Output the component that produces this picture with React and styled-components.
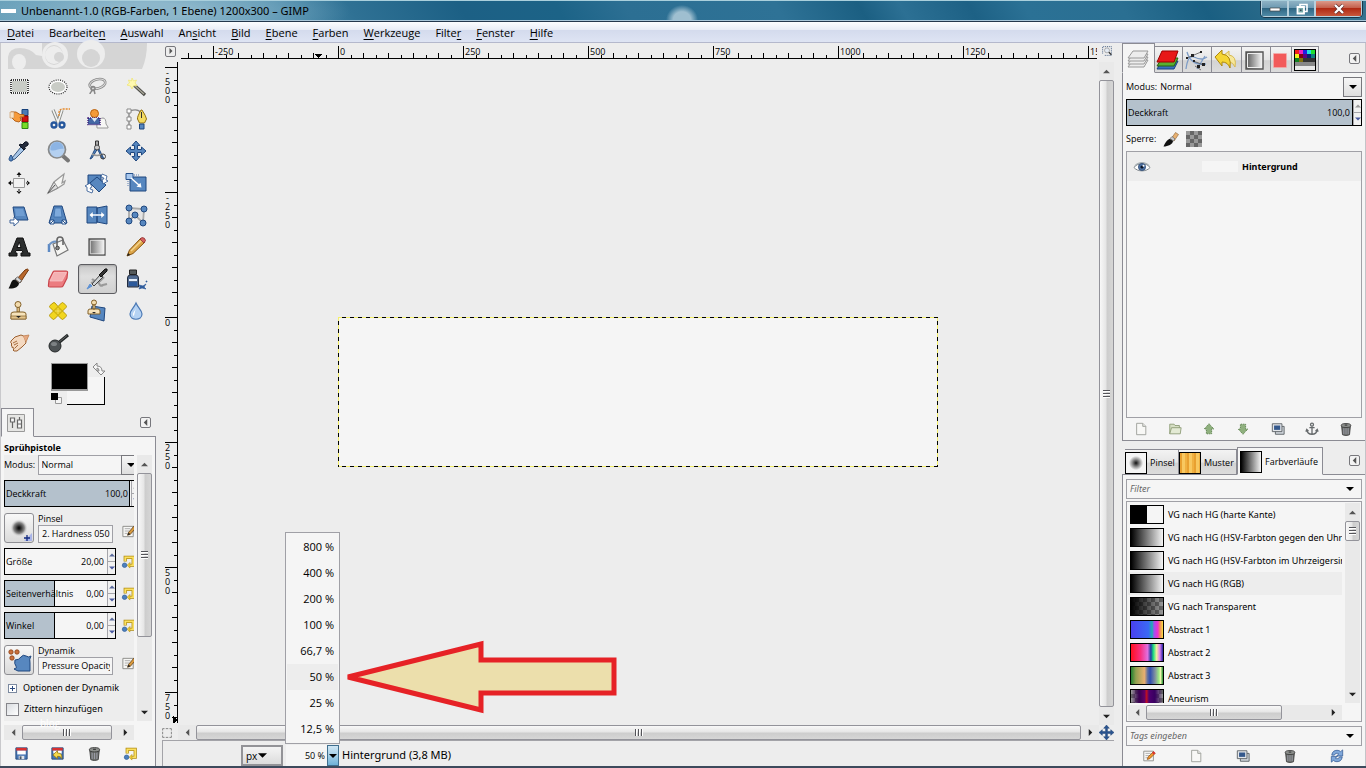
import React, { useState } from 'react';
import styled, { createGlobalStyle, css } from 'styled-components';

const GlobalStyle = createGlobalStyle`
  * { box-sizing: border-box; }
  body {
    margin: 0;
    background: #ededed;
    color: #000;
    font-family: "Open Sans", "Noto Sans", sans-serif;
    font-size: 9px;
    line-height: 12px;
  }
  button, input, select { font: inherit; color: inherit; }
  button { padding: 0; border: 0; background: none; }
  ul { list-style: none; margin: 0; padding: 0; }
`;

const line = '#8b8b93';
const wideFont = '"Noto Sans", "Open Sans", sans-serif';

/* ---------- window ---------- */

const Window = styled.div`
  display: flex;
  flex-direction: column;
  height: 100vh;
  overflow: hidden;
  border-bottom: 2px solid #3d4a5c;
`;

const TitleBar = styled.header`
  display: flex;
  align-items: flex-start;
  flex: none;
  height: 22px;
  overflow: hidden;
  border-top: 1px solid #a9cfdc;
  border-bottom: 1px solid #24384c;
  box-shadow: inset 0 -1px #a8c6d8;
  background:
    radial-gradient(ellipse 16px 15px at 682px 19px, #9fbfd0 0 55%, transparent),
    radial-gradient(ellipse 200px 40px at 150px 10px, #8db7cb 20%, transparent),
    linear-gradient(60deg, #5f9ab5 0, #4a8bab 20%, #2f7194 26%, #1c6085 34%, #1c6387 41%, #2c6f93 46%, #2e7296 57%, #1b5f82 63%, #2c7094 66%, #1d6185 71%, #2b7195 75%, #2a6f92 82%, #1a5f82 88%, #34728f 96%);
`;

const AppIcon = styled.span`
  width: 15px;
  height: 4px;
  margin: 8px 5px 0 1px;
  background: #fff;
`;

const Title = styled.h1`
  flex: 1;
  margin: 2px 0 0;
  font-family: ${wideFont};
  font-size: 11px;
  font-weight: 400;
  line-height: 15px;
`;

const WindowButtons = styled.div`
  display: flex;
  margin-right: 3px;
  border: 1px solid #18364a;
  border-top: 0;
  border-radius: 0 0 5px 5px;
  overflow: hidden;
`;

const WindowButton = styled.button`
  display: flex;
  justify-content: center;
  align-items: center;
  width: ${p => (p.$close ? 47 : 27)}px;
  height: 16px;
  border: solid #b7d0dc;
  border-width: 0 1px 1px;
  background: ${p => (p.$close
    ? 'linear-gradient(#dc9a8a, #c4604c 45%, #b02a14 50%, #c8583c)'
    : 'linear-gradient(#8fb2c4, #6d9ab2 45%, #2f6683 50%, #4f8aa6)')};
`;

const MenuBar = styled.nav`
  display: flex;
  flex: none;
  gap: 15px;
  height: 21px;
  padding: 0 7px;
  font-size: 11px;
  line-height: 21px;
  border-bottom: 1px solid #b4b8cc;
  background: linear-gradient(#fcfdfe, #e9edf6 38%, #d4dbed 42%, #dee4f3);
`;

const MenuItem = styled.button`
  u { text-underline-offset: 2px; }
`;

const Body = styled.div`
  display: grid;
  grid-template-columns: 156px minmax(0, 1fr) 244px;
  flex: 1;
  min-height: 0;
`;

/* ---------- shared widgets ---------- */

const Svg = styled.svg`
  display: block;
  flex: none;
  overflow: ${p => (p.$clip ? 'hidden' : 'visible')};
`;

const IconButton = styled.button`
  display: flex;
  justify-content: center;
  align-items: center;
  width: 18px;
  height: 18px;
`;

const IconRow = styled.div`
  display: flex;
  justify-content: space-between;
  align-items: center;
  flex: none;
  height: ${p => p.$height || 20}px;
  padding: ${p => p.$pad || '0 8px'};
`;

const DockMenuButton = styled.button`
  display: flex;
  justify-content: center;
  align-items: center;
  width: 11px;
  height: 11px;
  margin: 0 5px 9px auto;
  border: 1px solid #77777c;
  border-radius: 2px;
  background: #f2f2f2;
`;

const ScrollTrack = styled.div`
  display: flex;
  flex: none;
  flex-direction: ${p => (p.$vertical ? 'column' : 'row')};
  ${p => (p.$vertical ? 'width: 15px;' : 'height: 15px;')}
  background: #e9e9e9;
`;

const ScrollArrow = styled.button`
  display: flex;
  flex: none;
  justify-content: center;
  align-items: center;
  width: ${p => (p.$vertical ? 15 : 18)}px;
  height: ${p => (p.$vertical ? 18 : 15)}px;
`;

const Thumb = styled.div`
  display: flex;
  justify-content: center;
  align-items: center;
  flex: ${p => p.$share} 0 0;
  border: 1px solid #93939a;
  border-radius: 2px;
  background: linear-gradient(${p => (p.$vertical ? '90deg' : '180deg')}, #f8f8f8, #e6e6e6 45%, #cdcdcd 55%, #d6d6d6);
`;

const Rest = styled.div`
  flex: ${p => p.$share} 0 0;
`;

const Grip = styled.span`
  width: ${p => (p.$vertical ? 7 : 8)}px;
  height: ${p => (p.$vertical ? 8 : 7)}px;
  background: repeating-linear-gradient(${p => (p.$vertical ? '180deg' : '90deg')}, #55555a 0 1px, #fff 1px 2px, transparent 2px 3px);
`;

function Triangle({ dir, size = 7, color = '#222' }) {
  const paths = {
    up: 'M0 6 4 2l4 4z',
    down: 'M0 2h8L4 6z',
    left: 'M6 0v8L2 4z',
    right: 'M2 0v8l4-4z',
  };
  return <Svg width={size} height={size} viewBox="0 0 8 8"><path d={paths[dir]} fill={color} /></Svg>;
}

function Scrollbar({ vertical, share = 100 }) {
  return (
    <ScrollTrack $vertical={vertical}>
      <ScrollArrow $vertical={vertical} aria-label="zurück"><Triangle dir={vertical ? 'up' : 'left'} color="#555" /></ScrollArrow>
      <Thumb $vertical={vertical} $share={share}><Grip $vertical={vertical} /></Thumb>
      {share < 100 && <Rest $share={100 - share} />}
      <ScrollArrow $vertical={vertical} aria-label="weiter"><Triangle dir={vertical ? 'down' : 'right'} /></ScrollArrow>
    </ScrollTrack>
  );
}

const SpinBox = styled.div`
  display: flex;
  flex: none;
  align-items: center;
  width: ${p => p.$width};
  height: 27px;
  border: 1px solid #000;
  background: ${p => (p.$fill
    ? `linear-gradient(90deg, #b4c1cc ${p.$fill}, #000 ${p.$fill}, #000 calc(${p.$fill} + 1px), #f5f5f5 calc(${p.$fill} + 1px))`
    : '#f5f5f5')};

  label {
    flex: 1;
    width: 0;
    padding-left: 1px;
    white-space: nowrap;
  }
  input {
    width: 32px;
    padding: 0 2px 0 0;
    border: 0;
    background: none;
    text-align: right;
    outline: 0;
  }
`;

const Steppers = styled.div`
  display: flex;
  flex-direction: column;
  width: 8px;
  height: 25px;
  margin-left: 1px;
  border-left: 1px solid #a5a5aa;
  background: #f1f1f1;

  button {
    flex: 1;
    display: flex;
    justify-content: center;
    align-items: center;
  }
  button + button { border-top: 1px solid #a5a5aa; }
`;

function SpinField({ id, label, value, width, fill, dim }) {
  return (
    <SpinBox $width={width} $fill={fill}>
      <label htmlFor={id}>{label}</label>
      <input id={id} defaultValue={value} />
      <Steppers>
        <button aria-label="mehr"><Triangle dir="up" size={6} color={dim ? '#999' : '#5a6a9c'} /></button>
        <button aria-label="weniger"><Triangle dir="down" size={6} color="#4a5aa0" /></button>
      </Steppers>
    </SpinBox>
  );
}

/* ---------- small icons, 16 x 16 ---------- */

const small = {
  reset: <g fill="none"><path d="M4.500 8V3.500H13V12H9" stroke="#b08c10" strokeWidth="3.400" /><path d="M4.500 7.500V3.500H13V12H9" stroke="#fbe060" strokeWidth="1.800" /><path d="M9.500 9v6l-3-3z" fill="#f0cf3a" stroke="#b08c10" strokeWidth=".6" /><circle cx="3.800" cy="12" r="2.400" fill="#4d80bd" stroke="#2a5a96" strokeWidth=".7" /></g>,
  edit: <g><path d="M2 2.500h11v11H2z" fill="#f7f7f5" stroke="#8b8b88" /><path d="M4 5h6M4 7.500h5M4 10h3" stroke="#aaa" /><path d="m7 12 1-3 6-7 2 2-6 7z" fill="#d99a3c" stroke="#5c3a12" strokeWidth=".8" /><path d="m7 12 1-3 2 2z" fill="#222" /></g>,
  editRed: <g><path d="M2 2.500h11v11H2z" fill="#f7f7f5" stroke="#8b8b88" /><path d="M4 5h6M4 7.500h5M4 10h3" stroke="#aaa" /><path d="m6 12 1-3 6-6 2 2-6 6z" fill="#f09a30" stroke="#8c4a12" strokeWidth=".8" /><path d="m11.500 4.500 1.800-1.800 2 2-1.800 1.800z" fill="#d33" /></g>,
  save: <g><path d="M2 2h12v12H2z" fill="#4a78b5" stroke="#21467c" /><path d="M2.500 2h11v3h-11z" fill="#d83030" /><path d="M3.500 5h9v4h-9z" fill="#fff" /><path d="M5 10.500h6V14H5z" fill="#dfe4ea" /><path d="M6 11h2v3H6z" fill="#456" /></g>,
  restore: <g><path d="M2 2h12v12H2z" fill="#4a78b5" stroke="#21467c" /><path d="M2.500 2h11v3h-11z" fill="#d83030" /><path d="M3.500 5h9v3h-9z" fill="#fff" /><path d="M3 9.500 8 5v2.500c4 0 5 2 4.500 6C11.500 11.500 10.500 11 8 11v2.500z" fill="#f7d94a" stroke="#8c7210" strokeWidth=".8" /></g>,
  trash: <g><path d="m3 5 1 9.500c2 1.200 6 1.200 8 0L13 5z" fill="#6c6f6c" stroke="#333" strokeWidth=".9" /><path d="M5.500 7v7M8 7v7M10.500 7v7" stroke="#aab" strokeWidth=".8" /><ellipse cx="8" cy="4" rx="5.500" ry="2.300" fill="#8c8f8c" stroke="#333" strokeWidth=".9" /><path d="M6.500 3.500h3" stroke="#222" /></g>,
  page: <g><path d="M3 1.500h7l3.500 3.500v9.500H3z" fill="#f8f8f6" stroke="#999b96" /><path d="M10 1.500V5h3.500" fill="#e4e4e0" stroke="#999b96" /></g>,
  folder: <g><path d="M2 13.500v-11h5l1 1.500h5v3" fill="#d6dfc4" stroke="#8c9a75" /><path d="M2 13.500 4 6.500h11l-1 7z" fill="#e3ead4" stroke="#8c9a75" /></g>,
  raise: <path d="m8 2 5.500 6H11v5.500H5V8H2.500z" fill="#8fb07e" stroke="#567c46" strokeDasharray="1.500 1" />,
  lower: <path d="m8 14 5.500-6H11V2.500H5V8H2.500z" fill="#8fb07e" stroke="#567c46" strokeDasharray="1.500 1" />,
  copy: <g><path d="M5 5h10v9H5z" fill="#cfd4da" stroke="#565b60" /><path d="M1.500 2h11v9h-11z" fill="#e3e6ea" stroke="#565b60" /><path d="M3.500 4h7v5h-7z" fill="#34588c" /></g>,
  anchor: <g fill="none" stroke="#666a6c" strokeWidth="1.500"><circle cx="8" cy="3" r="1.700" /><path d="M8 5v9M5 6.500h6M2 9c.5 3.500 3 5 6 5s5.500-1.500 6-5M1 11l1-2.500 2 2M15 11l-1-2.500-2 2" /></g>,
  refresh: <g><path d="M2 7c.5-4 3-5.500 6-5.500 2 0 3 .6 4 1.500l2.500-2V8H7.500L10 5.700C8 4.200 5.500 5 5 7z" fill="#80a8da" stroke="#2c5590" strokeWidth=".8" /><path d="M14 9c-.5 4-3 5.500-6 5.500-2 0-3-.6-4-1.500l-2.500 2V8.500h7L6 10.300c2 1.500 4.500.7 5-1.300z" fill="#80a8da" stroke="#2c5590" strokeWidth=".8" /></g>,
  brush: <g><path d="m8 8 4.500-6.500 3 2L11 10z" fill="#e8b070" stroke="#8a6030" strokeWidth=".6" /><path d="m7 7.500 3.500 2.500 1.500-2-3-2.500z" fill="#c9ccd0" stroke="#555" strokeWidth=".6" /><path d="M7 8c-2 0-4 2-6.500 7.500C5 15.500 10 13 10 10z" fill="#111" /></g>,
  eye: <g><path d="M0 8.500C3 3.500 13 3.500 16 8.500 12.500 13 3.500 13 0 8.500z" fill="#fff" stroke="#70797f" strokeWidth=".9" /><path d="M.5 7C4 2.500 12 2.500 15.500 7" fill="none" stroke="#9aa4aa" /><circle cx="8" cy="8" r="3.600" fill="#4d71a3" stroke="#27446e" strokeWidth=".7" /><circle cx="8" cy="8" r="1.600" fill="#0b1526" /><circle cx="9.500" cy="6.700" r="1" fill="#fff" /></g>,
  nav: <path d="M8 0 5 3.500h2V7H3.500V5L0 8l3.500 3V9H7v3.500H5L8 16l3-3.500H9V9h3.500v2L16 8l-3.500-3v2H9V3.500h2z" fill="#2a5490" stroke="#163a6c" strokeWidth=".5" />,
  zoomFit: <g fill="none" stroke="#345078"><path d="M1 12V1h14v14H4" strokeDasharray="1.500 1.500" strokeWidth="1.400" /><circle cx="8" cy="7" r="4" fill="#e2e9f2" stroke="#888" /><path d="m11 10 4 4" stroke="#333" strokeWidth="2" /></g>,
  quickMask: <path d="M1 4V1h3M6 1h4M12 1h3v3M15 6v4M15 12v3h-3M10 15H6M4 15H1v-3M1 10V6" fill="none" stroke="#777" strokeWidth="1.400" />,
};

const SmallIcon = ({ name, size = 14 }) => <Svg width={size} height={size} viewBox="0 0 16 16">{small[name]}</Svg>;

/* ---------- toolbox icons, 24 x 24 ---------- */

const blue = { fill: '#5787bf', stroke: '#1f477f', strokeWidth: 1 };

const tools = [
  ['Rechteckige Auswahl', <g><path d="M4.500 5.500h16v12h-16z" fill="#c9ccc6" stroke="#fff" /><path d="M4 5h17M4 18h17M4 5v13M21 5v13" fill="none" stroke="#000" strokeWidth="1.400" strokeDasharray="1 1" /></g>],
  ['Elliptische Auswahl', <g><ellipse cx="12" cy="12" rx="9" ry="7" fill="#fff" /><ellipse cx="12" cy="12" rx="9" ry="7" fill="none" stroke="#222" strokeWidth="1.200" strokeDasharray="1 1.200" /><ellipse cx="12" cy="12" rx="7" ry="5" fill="#c9ccc6" /></g>],
  ['Freie Auswahl', <g fill="none" stroke="#888" ><ellipse cx="12.500" cy="9" rx="8" ry="4.500" strokeWidth="2.600" transform="rotate(-15 12 9)" /><ellipse cx="12.500" cy="9" rx="8" ry="4.500" stroke="#ddd" strokeWidth="1" transform="rotate(-15 12 9)" /><circle cx="8" cy="13.500" r="2" strokeWidth="1.500" /><path d="M7 15c0 2-2 2-2 4M9 15l1 4" strokeWidth="1.500" /></g>],
  ['Zauberstab', <g><path d="m10 10 11 10" stroke="#4b4b46" strokeWidth="3.200" /><path d="m10 10 10 9" stroke="#aaa89a" strokeWidth="1.300" /><path d="m8 3 1.500 3 3-1-1.500 3 2 2.500-3.500.2L8 14l-1.500-3L3 10l2.500-2L4.500 5l3 1z" fill="#fff9b0" stroke="#efe478" strokeWidth=".8" /></g>],
  ['Nach Farbe auswählen', <g><path d="M15 2.500h6v6h-6z" fill="#4a7ab5" stroke="#16407a" /><path d="M15 9h6v6h-6z" fill="#d01010" stroke="#800" /><path d="M15 15.500h6v6h-6z" fill="#78dc28" stroke="#2e8a10" /><path d="M4 5h5l4 2.500h4v2.500h-4l1 3-2 2-4-1-4-4z" fill="#f79b3a" stroke="#b05a10" strokeWidth=".9" /><path d="M3 5h4v6H3z" fill="#f6e2c8" stroke="#c89058" strokeWidth=".6" /></g>],
  ['Magnetische Schere', <g fill="none"><path d="m7 3 5 12m4-12-4 12" stroke="#888b88" strokeWidth="3.400" /><path d="m7 3 5 12m4-12-4 12" stroke="#f4f4f2" strokeWidth="1.600" /><circle cx="8" cy="18" r="2.500" stroke="#25569c" strokeWidth="2.300" /><circle cx="16" cy="18" r="2.500" stroke="#25569c" strokeWidth="2.300" /><path d="M13 9V6q0-4 4-4h7" stroke="#e58a2c" strokeWidth="1.300" strokeDasharray="2 1" /></g>],
  ['Vordergrundauswahl', <g><path d="M12 20c-1-2 2-9 6-9q3 0 3 6l2 3v1H12z" fill="#f7f7f5" stroke="#999" /><circle cx="9.500" cy="6.500" r="4" fill="#f49a38" stroke="#b8600c" /><path d="M3 11h12v6.500H3z" fill="#4468a5" stroke="#3c1878" strokeDasharray="1 1" strokeWidth="1.400" /><path d="m6.500 11 3 4 3-4z" fill="#dce6f2" /></g>],
  ['Pfade', <g><path d="M5 4v16M6 4q8-3 11 2" fill="none" stroke="#888" strokeWidth="1.400" /><path d="M3 2h4v4H3zM3 10h4v4H3zM3 18h4v4H3z" fill="#fff" stroke="#888" /><path d="M17 3q-4 7-3.500 9l2 4h5l2-4Q22 9 18 3z" fill="#f5dc62" stroke="#927010" /><path d="M17.500 5v6" stroke="#333" /><path d="M15.500 17h4.500v5h-4.500z" {...blue} /></g>],
  ['Farbpipette', <g><path d="m14 8 3 3-9 9c-2 1-3 1-3-1z" fill="#a9c7e8" stroke="#3c5a80" /><path d="m12 6 5 5 1.500-1.500-1-1L21 6c1-2-1-4-3-3l-3 3-1-1z" fill="#242b3c" stroke="#0c1220" /><path d="M4 16c-3 4-2 6 0 6s3-2 0-6z" {...blue} /></g>],
  ['Vergrößerung', <g><path d="m17 17 5 4.500" stroke="#777" strokeWidth="4" strokeLinecap="round" /><circle cx="11" cy="10.500" r="8.500" fill="#b4d0f0" stroke="#888a8b" strokeWidth="1.700" /><path d="M4.500 11c4 2 9-2 13-1 0-4-3-7-6.500-7S4 6 4.500 11z" fill="#8cb4e4" /></g>],
  ['Maßband', <g><path d="m11 8-6 12 2-1 6-10M13 8l6 12-2-1-5-10" {...blue} /><path d="M10.500 2h3v7h-3z" fill="#aaa" stroke="#333" /><circle cx="12" cy="8.500" r="2.500" fill="#ccc" stroke="#444" /><path d="M7 15q5 3 10 0" fill="none" stroke="#999" strokeWidth="1.500" /><circle cx="18" cy="17.500" r="2.500" fill="none" stroke="#444" /></g>],
  ['Verschieben', <path d="m12 2 4 4.500h-2.500v4h4V8L22 12l-4.500 4v-2.500h-4v4H16L12 22l-4-4.500h2.500v-4h-4V16L2 12l4.500-4v2.500h4v-4H8z" {...blue} />],
  ['Ausrichten', <g><path d="M6.500 7.500h11v9h-11z" fill="#f3f3f3" stroke="#999" /><path d="m12 1 2.500 3h-5zM12 23l2.500-3h-5zM1 12l3-2.500v5zM23 12l-3-2.500v5zM11.500 3h1v3h-1zM11.500 18h1v3h-1zM3 11.500h3v1H3zM19 11.500h2v1h-2z" fill="#111" /></g>],
  ['Zuschneiden', <g><path d="M2 22 8 11 18 3l-2 9 3-2-1 3-6 4z" fill="#f5f5f3" stroke="#999" strokeWidth="1.200" /><path d="m2 22 6-11 4 6z" fill="#ddd" stroke="#888" /><path d="m2 22 7-8" stroke="#555" /></g>],
  ['Drehen', <g><path d="M3 4h13v9H3z" {...blue} /><path d="m12 6 9 8-7 7-9-9z" {...blue} /><path d="m17 3 5 2-1 4 2 1-5 3-1-5 2 0q0-2-3-2zM7 22l-5-2 0-4-2-1 5-3 2 4-2 1q0 2 3 2z" fill="#fff" stroke="#2a538f" strokeWidth=".8" /></g>],
  ['Skalieren', <g><path d="M6 6h16v14H6z" {...blue} /><path d="M2 2.500h7v6H2z" fill="#a9c8ee" stroke="#24508c" /><path d="m7 7 9 8" stroke="#fff" strokeWidth="1.500" /><path d="m17.500 16.500-5-.7 4-4z" fill="#fff" /><path d="M10 4h5M4 10v6" stroke="#5a7db0" strokeDasharray="1 1" /></g>],
  ['Scheren', <g><path d="M6 4h11l4 13H8z" {...blue} /><path d="M8 6h8l2 7H9z" fill="#6f9dd2" /><path d="M3 17h4v-3l5 4.500L7 23v-3H3z" fill="#fff" stroke="#2a538f" strokeWidth=".9" /></g>],
  ['Perspektive', <g><path d="M8 3h8l5 17H3z" {...blue} /><path d="M9 5h6l1 9H8z" fill="#7eaadc" stroke="#376aa8" strokeWidth=".7" /><path d="M4 17h4v4H4zM16 17h4v4h-4z" fill="#fff" stroke="#24508c" /><path d="m4 21 4-4M20 21l-4-4" stroke="#24508c" /></g>],
  ['Spiegeln', <g><path d="M2 4h10v16H2zM12 5l10-2v18l-10-2z" {...blue} /><path d="m4 12 4-3.500V11h8V8.500l4 3.500-4 3.500V13H8v2.500z" fill="#fff" stroke="#376aa8" strokeWidth=".5" /></g>],
  ['Käfig-Transformation', <g><path d="M5 5l15 1-1 14-8-8-6 6z" fill="#e4e4e4" stroke="#aaa" strokeWidth="1.800" />{[[5, 5], [20, 6], [11, 12], [5, 18], [19, 20]].map(([x, y]) => <circle key={x + y} cx={x} cy={y} r="3" {...blue} />)}</g>],
  ['Text', <path d="M2 21v-3h2L10 3h6l5 15h2v3h-9v-3h2l-.8-2.500H9L8 18h2v3zM10 12.500h4L12.300 7z" fill="#2c2e2e" stroke="#111" fillRule="evenodd" />],
  ['Füllen', <g><path d="M3 9v8" stroke="#5d8ac4" strokeWidth="2.500" /><path d="m7 9 10-4 5 10-11 6z" fill="#f5f5f3" stroke="#777" strokeWidth="1.200" /><path d="M3 10q4-5 9-3" fill="none" stroke="#6d93c4" strokeWidth="2" /><path d="M11 12V5q0-3 3-3t3 3v5" fill="none" stroke="#666" strokeWidth="1.600" /><circle cx="11.500" cy="13" r="1.800" fill="#888" stroke="#444" /></g>],
  ['Farbverlauf', <g><defs><linearGradient id="toolGrad"><stop offset="0" stopColor="#666" /><stop offset="1" stopColor="#fff" /></linearGradient></defs><path d="M4 4h16v16H4z" fill="url(#toolGrad)" stroke="#555" strokeWidth="1.300" /><path d="M5.300 5.300h13.500v13.500H5.300z" fill="none" stroke="#eee" strokeWidth=".8" /></g>],
  ['Stift', <g><path d="m3 21 2.500-6L17 3l4 4L9 18.500z" fill="#dca548" stroke="#87540f" /><path d="m7 16 11-11" stroke="#f3d48b" strokeWidth="1.500" /><path d="m16 4 2-1.500q3 0 3.500 3L20 8z" fill="#d56262" stroke="#923030" strokeWidth=".8" /><path d="m3 21 1.200-3 2 2z" fill="#222" /></g>],
  ['Pinsel', <g><path d="M9 13 18 3q3-2 3.500 0L13 16z" fill="#b9682c" stroke="#74380c" /><path d="m8 12 5 4 1.500-2.500-4-3.500z" fill="#d9dadc" stroke="#666" /><path d="M8 12.500c-4 0-4 5-6.500 9C7 22 12 20 12 16z" fill="#111" /></g>],
  ['Radierer', <g><path d="M3 13 7 5q.5-1 1.500-1H20q2 0 1.500 2L21 11l-4 8q-.5 1-2 1H4q-2 0-1.500-2z" fill="#ec7c80" stroke="#c8464c" strokeWidth="1.200" /><path d="m8 5.500-4 8.500h12l4.500-8.500z" fill="#f4b0b2" stroke="#f9cccd" strokeWidth=".7" /></g>],
  ['Sprühpistole', <g><path d="M6 16q5-2 8 0 1 4 4 2l4-1M7 12q3 3 8 2l4-4" fill="none" stroke="#999" strokeWidth="2.200" /><path d="m7 17 8-9 3 2-9 9z" fill="#cfd2d4" stroke="#444" /><path d="m14 8 6-6q3-1 2 2l-6 6z" fill="#333" stroke="#111" /><path d="m2 22 3-5 2 2z" fill="#5f92d4" stroke="#5f92d4" /></g>],
  ['Tinte', <g><path d="M3.500 11q0-3 3-3h5q3 0 3 3v9h-11z" fill="#506a90" stroke="#222c40" /><path d="M5 12h8v2H5z" fill="#e4eefb" /><path d="M5 15h8v4H5z" fill="#2c5a9c" /><path d="M5.500 3h7v4.500h-7z" fill="#545a5c" stroke="#222" /><path d="m15 18 4 1 3-2-2 3 2 2-4-1-3 1 1-2zM22 14h1v1h-1z" fill="#2f5c9c" stroke="#2f5c9c" strokeWidth=".7" /></g>],
  ['Klonen', <g><circle cx="11" cy="5.500" r="3" fill="#f3dcae" stroke="#826028" /><path d="M10 8.500h2.500V13H10z" fill="#dcbb80" stroke="#826028" strokeWidth=".8" /><path d="M4 20v-5q0-2 3-2h9q3 0 3 2v5z" fill="#f6e3bb" stroke="#826028" /><path d="M4 17h15v3H4z" fill="#e2c48c" stroke="#826028" strokeWidth=".7" /><path d="M9 17h5l-2.500 2z" fill="#222" /></g>],
  ['Heilen', <g><path d="M4 6.500 7 4q1-1 2 0l3 3.500L15.500 4q1-1 2 0L20 6.500q1 1 0 2L16.500 12l3.500 3.500q1 1 0 2L17.500 20q-1 1-2 0L12 16.500 8.500 20q-1 1-2 0L4 17.500q-1-1 0-2L7.500 12 4 8.500q-1-1 0-2z" fill="#f2d61f" stroke="#b89a08" strokeLinejoin="round" /><path d="m12 7.500 4.500 4.500-4.500 4.500L7.500 12z" fill="#e2c416" stroke="#b89a08" strokeWidth=".7" /><path d="M9.500 12h5M12 9.500v5" stroke="#fff29a" strokeDasharray="1 1" /></g>],
  ['Perspektivisches Klonen', <g><path d="m7 7 13 2-1 13-14-4z" {...blue} /><circle cx="9" cy="3.500" r="2.500" fill="#f3dcae" stroke="#826028" /><path d="M8 6h2v4H8zM3 15v-3q0-2 2-2h8q2 0 2 2v3z" fill="#f6e3bb" stroke="#826028" /><path d="M7 13h4l-2 1.500z" fill="#222" /></g>],
  ['Weichzeichnen', <g><path d="M12 4c-2 5-6 7-6 11 0 7 12 7 12 0 0-4-4-6-6-11z" fill="#b5d2f3" stroke="#4a78b4" strokeWidth="1.200" /><path d="M12 9c-1 3-3 4-3 6s1 2 1 2 1-5 2-8z" fill="#fff" /></g>],
  ['Verschmieren', <g><path d="m4 10 4-4 6-2q3 0 4 4l1 4-4 4-5 4-3 0q-2-1 0-2l0-1q-3 0-2-2-2-1 0-2-2-1-1-3z" fill="#f4d9c1" stroke="#9c6030" /><path d="m6 12 4-2M7 14l4-2M8 17l3-3" stroke="#9c6030" strokeWidth=".9" /><path d="m16 5 6-1-3 7" fill="#e6a880" stroke="#c08050" strokeWidth=".8" /></g>],
  ['Abwedeln', <g><path d="m11 13 11-9" stroke="#222627" strokeWidth="3" /><path d="m12 12 9-7.500" stroke="#777" strokeWidth=".8" /><circle cx="9" cy="15" r="6" fill="#4d5254" stroke="#25292a" /><ellipse cx="8" cy="13" rx="3" ry="2" fill="#7d8284" /></g>],
];

/* ---------- toolbox ---------- */

const LeftDock = styled.aside`
  display: flex;
  flex-direction: column;
  min-height: 0;
  border-left: 1px solid #c9c9cc;
`;

const ToolGrid = styled.div`
  display: grid;
  flex: none;
  grid-template-columns: repeat(4, 39px);
  grid-auto-rows: 32px;
  margin-left: -1px;
`;

const ToolButton = styled.button`
  display: flex;
  justify-content: center;
  align-items: center;
  height: 30px;
  margin-top: 1px;
  padding-right: 2px;
  ${p => p.$active && css`
    border: 1px solid #5c5c60;
    border-radius: 3px;
    background: linear-gradient(#c9c9c9, #dedede 40%, #d0d0d0);
    box-shadow: inset 0 1px 2px #aaa;
  `}
`;

const ColorArea = styled.div`
  flex: none;
  height: 49px;
  padding: 3px 0 0 49px;
`;

const NotebookTabs = styled.div`
  display: flex;
  align-items: flex-end;
  flex: none;
  height: ${p => p.$height}px;
  padding-left: ${p => p.$indent || 0}px;
  box-shadow: inset 0 -1px ${line};
`;

const Tab = styled.button`
  display: flex;
  flex: none;
  align-items: center;
  gap: 3px;
  width: ${p => p.$width}px;
  height: ${p => p.$height}px;
  padding-top: ${p => p.$top || 0}px;
  padding-left: ${p => p.$pad || 0}px;
  white-space: nowrap;
  border: 1px solid ${line};
  border-left-width: ${p => (p.$active ? 1 : 0)}px;
  background: linear-gradient(#f3f3f3, #e6e6e6 50%, #d3d3d3 55%, #dcdcdc);
  ${p => p.$active && css`
    border-bottom-color: #f5f5f5;
    background: #f5f5f5;
  `}
`;

const OptionsPanel = styled.section`
  display: flex;
  flex-direction: column;
  flex: 1;
  min-height: 0;
  padding: 4px 3px 0;
  border-right: 1px solid ${line};
  background: #f5f5f5;
`;

const OptionsTitle = styled.h2`
  flex: none;
  margin: 0;
  font-family: ${wideFont};
  font-size: 9px;
  line-height: 14px;
`;

const OptionsView = styled.div`
  display: flex;
  flex: 1;
  justify-content: space-between;
  min-height: 0;
`;

const OptionsClip = styled.div`
  width: 130px;
  overflow: hidden;
  background: #ededed;
`;

const OptionsForm = styled.div`
  display: flex;
  flex-direction: column;
  gap: 5px;
  width: 136px;
`;

const ModeRow = styled.div`
  display: flex;
  align-items: center;
  height: 20px;
  white-space: nowrap;
`;

const ModeSelect = styled.select`
  appearance: none;
  flex: 1;
  min-width: 0;
  height: 20px;
  padding: 0 3px;
  border: ${p => (p.$plain ? 0 : '1px solid #a0a0a6')};
  border-right: 0;
  border-radius: 0;
  background: #f5f5f5;
`;

const DropButton = styled.button`
  display: flex;
  justify-content: center;
  align-items: center;
  width: 19px;
  height: 20px;
  border: 1px solid #77777c;
  background: linear-gradient(#f6f6f6, #dedede);
`;

const ResourceRow = styled.div`
  display: grid;
  grid-template-columns: 30px 75px 16px;
  column-gap: 4px;
  align-items: center;
  height: 31px;

  > :last-child { margin-left: 4px; margin-top: 8px; }
`;

const ResourceButton = styled.button`
  display: flex;
  justify-content: center;
  align-items: center;
  width: 30px;
  height: 30px;
  border: 1px solid #8e8e93;
  border-radius: 3px;
  background: linear-gradient(#f8f8f8, #dadada);
`;

const ResourceField = styled.div`
  display: flex;
  flex-direction: column;

  input {
    width: 75px;
    height: 18px;
    padding: 0 2px 0 3px;
    border: 1px solid #a0a0a6;
    background: #f5f5f5;
  }
`;

const ResetRow = styled.div`
  display: flex;
  align-items: center;
  gap: 5px;
`;

const ExpanderRow = styled.div`
  display: flex;
  align-items: center;
  gap: 6px;
  height: 16px;
  padding-left: 4px;
  white-space: nowrap;
  font-family: ${wideFont};
`;

const Expander = styled.button`
  display: flex;
  width: 9px;
  height: 9px;
  border: 1px solid #7c8aa0;
  background: linear-gradient(#2b4a80, #2b4a80) center / 5px 1px no-repeat, linear-gradient(#2b4a80, #2b4a80) center / 1px 5px no-repeat, #fff;
`;

const Check = styled.input`
  appearance: none;
  width: 13px;
  height: 13px;
  margin: 0 -1px 0 -2px;
  border: 1px solid #85858a;
  background: linear-gradient(135deg, #d9dce0, #fff);
`;

const FooterGap = styled.div`
  position: relative;
  flex: none;
  width: 130px;
  margin-top: 4px;
`;

const Watermark = styled.span`
  position: absolute;
  left: 36px;
  top: -8px;
  color: #fff;
  font-size: 10px;
`;

function ResetField(props) {
  return (
    <ResetRow>
      <SpinField width="112px" {...props} />
      <button aria-label={`${props.label} zurücksetzen`}><SmallIcon name="reset" size={15} /></button>
    </ResetRow>
  );
}

function Toolbox() {
  const [active, setActive] = useState('Sprühpistole');
  return (
    <LeftDock>
      <Svg width="155" height="28" viewBox="1 0 155 28">
        <path d="M8 26V14q1-9 12-9 10 0 16 7l6 1V0h105q0 15-5 26z" fill="#d5d5d5" />
        <ellipse cx="19" cy="19" rx="7" ry="8" fill="#ededed" />
        <circle cx="55" cy="12" r="13" fill="#ededed" />
        <ellipse cx="54" cy="12" rx="9" ry="10" fill="#d5d5d5" />
        <circle cx="54" cy="12" r="9" fill="#ededed" />
        <circle cx="59" cy="14" r="5" fill="#d5d5d5" />
        <circle cx="91" cy="11" r="14" fill="#ededed" />
        <circle cx="91" cy="15" r="9" fill="#d5d5d5" />
      </Svg>
      <ToolGrid>
        {tools.map(([name, icon]) => (
          <ToolButton key={name} aria-label={name} $active={name === active} onClick={() => setActive(name)}>
            <Svg width="24" height="24" viewBox="0 0 24 24">{icon}</Svg>
          </ToolButton>
        ))}
      </ToolGrid>
      <ColorArea>
        <Svg width="58" height="46" viewBox="0 0 58 46">
          <path d="M17 15h38v28H17z" fill="#000" /><path d="M17 15h37v27H17z" fill="#f5f5f5" />
          <path d="M0 0h38v29H0z" fill="#ededed" /><path d="M1 1h37v28H1z" fill="#999" /><path d="M2 2h35v25H2z" fill="#000" />
          <path d="M5.500 35.500h6v6h-6z" fill="#f5f5f5" stroke="#999" /><path d="M1 31h7v7H1z" fill="#000" />
          <path d="m43 5 4-4v3q5 0 5 5h3l-4 4-4-4h2q0-3-2-3v3z" fill="#f5f5f5" stroke="#888" />
        </Svg>
      </ColorArea>
      <NotebookTabs $height={29}>
        <Tab $active $width={33} $height={29} $pad={5} aria-label="Werkzeugeinstellungen">
          <Svg width="18" height="18" viewBox="0 0 18 18">
            <path d="M.5.500h17v17H.5z" fill="#e6e6e4" stroke="#999" />
            <path d="M3.500 4h4v4h-4zM5.500 8v6M12.500 3v3M10.500 6h4v4h-4zM10.500 10h4v4h-4z" fill="#f8f8f8" stroke="#666" strokeWidth="1.200" />
          </Svg>
        </Tab>
        <DockMenuButton aria-label="Reitermenü"><Triangle dir="left" color="#555" /></DockMenuButton>
      </NotebookTabs>
      <OptionsPanel>
        <OptionsTitle>Sprühpistole</OptionsTitle>
        <OptionsView>
          <OptionsClip>
            <OptionsForm>
              <ModeRow>
                <label htmlFor="toolMode">Modus:&nbsp;</label>
                <ModeSelect id="toolMode"><option>Normal</option></ModeSelect>
                <DropButton tabIndex={-1} aria-label="Modus öffnen"><Triangle dir="down" size={8} color="#000" /></DropButton>
              </ModeRow>
              <SpinField id="toolOpacity" label="Deckkraft" value="100,0" width="136px" fill="124px" dim />
              <ResourceRow>
                <ResourceButton aria-label="Pinsel wählen">
                  <Svg width="26" height="26" viewBox="0 0 26 26">
                    <defs><radialGradient id="softBrush"><stop offset=".1" stopColor="#111" /><stop offset=".6" stopColor="#888" /><stop offset="1" stopColor="#f0f0f0" stopOpacity="0" /></radialGradient></defs>
                    <circle cx="13" cy="13" r="9" fill="url(#softBrush)" />
                    <path d="M26 18v8h-8z" fill="#a9b4e8" /><path d="M18 23h6M21 20v6" stroke="#112a80" strokeWidth="1.300" />
                  </Svg>
                </ResourceButton>
                <ResourceField>
                  <label htmlFor="toolBrush">Pinsel</label>
                  <input id="toolBrush" defaultValue="2. Hardness 050" />
                </ResourceField>
                <button aria-label="Pinsel bearbeiten"><SmallIcon name="edit" size={15} /></button>
              </ResourceRow>
              <ResetField id="size" label="Größe" value="20,00" />
              <ResetField id="ratio" label="Seitenverhältnis" value="0,00" fill="49px" />
              <ResetField id="angle" label="Winkel" value="0,00" fill="49px" />
              <ResourceRow>
                <ResourceButton aria-label="Dynamik wählen">
                  <Svg width="26" height="26" viewBox="0 0 26 26">
                    <path d="M9 13q4 0 6-3t5-1q3 2 5 0-2 3-1 7v8H12l-4-2q4-1 2-3-2-2-1-6z" {...blue} />
                    {[[5, 5], [11, 5], [6, 11]].map(([x, y]) => <circle key={x} cx={x} cy={y} r="2.200" fill="#c9703c" stroke="#8c3f14" strokeWidth=".8" />)}
                  </Svg>
                </ResourceButton>
                <ResourceField>
                  <label htmlFor="dynamics">Dynamik</label>
                  <input id="dynamics" defaultValue="Pressure Opacity" />
                </ResourceField>
                <button aria-label="Dynamik bearbeiten"><SmallIcon name="edit" size={15} /></button>
              </ResourceRow>
              <ExpanderRow><Expander aria-label="Aufklappen" />Optionen der Dynamik</ExpanderRow>
              <ExpanderRow as="label"><Check type="checkbox" />Zittern hinzufügen</ExpanderRow>
            </OptionsForm>
          </OptionsClip>
          <Scrollbar vertical share={71} />
        </OptionsView>
        <FooterGap>
          <Scrollbar share={96} />
          <Watermark>blog</Watermark>
        </FooterGap>
        <IconRow $height={26} $pad="0 12px 0 8px">
          {['save', 'restore', 'trash', 'reset'].map(n => <IconButton key={n} aria-label={n}><SmallIcon name={n} size={15} /></IconButton>)}
        </IconRow>
      </OptionsPanel>
    </LeftDock>
  );
}

/* ---------- image window ---------- */

const ImageArea = styled.main`
  display: grid;
  grid-template-columns: 22px minmax(0, 1fr) 15px;
  grid-template-rows: 16px minmax(0, 1fr) 15px 26px;
  padding-right: 8px;
`;

const CornerCell = styled.div`
  display: flex;
  align-items: center;
  justify-content: ${p => p.$align || 'center'};
  padding-right: ${p => (p.$align ? 2 : 0)}px;
`;

const CornerButton = styled.button`
  display: flex;
  justify-content: center;
  align-items: center;
  width: 11px;
  height: 11px;
  border: 1px solid #77777c;
  border-radius: 2px;
`;

const HRulerCell = styled.div`
  padding: 0 2px 0 3px;
`;

const VRulerCell = styled.div`
  padding: 3px 0 2px 9px;
  min-height: 0;
`;

const VScrollCell = styled.div`
  display: flex;
  padding-top: 3px;
`;

const Canvas = styled.div`
  position: relative;
  min-width: 0;
`;

const ImageLayer = styled.div`
  position: absolute;
  left: 160px;
  top: 258px;
`;

const ArrowNote = styled.div`
  position: absolute;
  left: 166px;
  top: 582px;
`;

const StatusBar = styled.footer`
  grid-column: 1 / -1;
  display: flex;
  align-items: flex-end;
  margin-left: 6px;
  padding-left: 78px;
  border: solid #a3a3a8;
  border-width: 1px 0 0 1px;
`;

const UnitButton = styled.button`
  display: flex;
  align-items: center;
  gap: 1px;
  width: 42px;
  height: 21px;
  margin-right: 3px;
  padding-left: 3px;
  border: 2px solid #939397;
  background: linear-gradient(#f4f4f4, #dcdcdc);
  font-size: 10px;
`;

const ZoomCombo = styled.div`
  position: relative;
  display: flex;
  width: 53px;
  height: 21px;

  input {
    width: 41px;
    padding: 0 2px;
    border: 0;
    background: #f5f5f5;
    text-align: right;
  }
  > button {
    display: flex;
    justify-content: center;
    align-items: center;
    width: 12px;
    border: 1px solid #3f6f8f;
    background: linear-gradient(#cfe6f4, #a7d0e8 48%, #6fb2d8);
  }
`;

const ZoomList = styled.ul`
  position: absolute;
  left: -1px;
  bottom: 22px;
  width: 55px;
  padding: 1px;
  border: 1px solid #a0a0a6;
  background: #f5f5f5;
  font-size: 11px;
  z-index: 2;

  li {
    height: 26px;
    padding-right: 4px;
    line-height: 26px;
    text-align: right;
  }
  li[aria-selected='true'] { background: #ededed; }
`;

const StatusText = styled.span`
  padding-left: 3px;
  font-family: ${wideFont};
  font-size: 11px;
  line-height: 23px;
`;

const rulerSteps = (from, to) => {
  const steps = [];
  for (let u = from; u <= to; u += 25) steps.push(u);
  return steps;
};

const tickLength = u => (u % 250 === 0 ? 13 : u % 50 === 0 ? 6 : 4);

function HRuler({ origin }) {
  return (
    <Svg $clip width="100%" height="16" shapeRendering="crispEdges">
      <rect y="15" width="100%" height="1" />
      {rulerSteps(-300, 1600).map(u => (
        <rect key={u} x={Math.round(origin + u / 2)} y={16 - tickLength(u)} width="1" height={tickLength(u)} />
      ))}
      {rulerSteps(-300, 1600).filter(u => u % 250 === 0).map(u => (
        <text key={u} x={origin + u / 2 + 2} y="12" fontSize="9">{u}</text>
      ))}
      <path d="M133 11h8l-4 4z" />
    </Svg>
  );
}

function VRuler({ origin }) {
  return (
    <Svg $clip width="13" height="100%" shapeRendering="crispEdges">
      <rect x="12" width="1" height="100%" />
      {rulerSteps(-500, 825).map(u => (
        <rect key={u} x={13 - tickLength(u)} y={Math.round(origin + u / 2)} width={tickLength(u)} height="1" />
      ))}
      {rulerSteps(-500, 825).filter(u => u % 250 === 0).map(u => (
        String(u).split('').map((c, i) => (
          <text key={`${u}-${i}`} x={c === '-' ? 1 : 0} y={origin + u / 2 + 9 + i * 9} fontSize="9">{c}</text>
        ))
      ))}
      <path d="M8 654v8l4-4z" />
    </Svg>
  );
}

const zoomLevels = ['800 %', '400 %', '200 %', '100 %', '66,7 %', '50 %', '25 %', '12,5 %'];

function ImageWindow() {
  return (
    <ImageArea>
      <CornerCell $align="flex-end"><CornerButton aria-label="Bildmenü"><Triangle dir="right" size={6} color="#555" /></CornerButton></CornerCell>
      <HRulerCell><HRuler origin={157} /></HRulerCell>
      <CornerCell><SmallIcon name="zoomFit" size={10} /></CornerCell>

      <VRulerCell><VRuler origin={255} /></VRulerCell>
      <Canvas>
        <ImageLayer>
          <Svg width="600" height="150" shapeRendering="crispEdges">
            <rect width="600" height="150" fill="#f4f06a" />
            <path d="M0 .5h600M0 149.500h600M.5 0v150M599.500 0v150" stroke="#000" strokeDasharray="4 4" strokeDashoffset="-4" />
            <rect x="1" y="1" width="598" height="148" fill="#f5f5f5" />
          </Svg>
        </ImageLayer>
        <ArrowNote>
          <Svg width="274" height="74" viewBox="0 0 274 74">
            <path d="M4 36 137 3v16h133v33H137v17z" fill="#ecdfac" stroke="#e62226" strokeWidth="5" />
          </Svg>
        </ArrowNote>
      </Canvas>
      <VScrollCell><Scrollbar vertical /></VScrollCell>

      <CornerCell><SmallIcon name="quickMask" size={10} /></CornerCell>
      <Scrollbar />
      <CornerCell><SmallIcon name="nav" size={15} /></CornerCell>

      <StatusBar>
        <UnitButton>px<Triangle dir="down" size={9} color="#000" /></UnitButton>
        <ZoomCombo>
          <input aria-label="Zoom" defaultValue="50 %" />
          <button aria-label="Zoomstufen"><Triangle dir="down" size={8} color="#000" /></button>
          <ZoomList role="listbox" aria-label="Zoomstufen">
            {zoomLevels.map(z => <li key={z} role="option" aria-selected={z === '50 %'}>{z}</li>)}
          </ZoomList>
        </ZoomCombo>
        <StatusText>Hintergrund (3,8 MB)</StatusText>
      </StatusBar>
    </ImageArea>
  );
}

/* ---------- right dock ---------- */

const RightDock = styled.aside`
  display: flex;
  flex-direction: column;
  min-height: 0;
  border-right: 1px solid #c4c4c8;
`;

const DockPanel = styled.section`
  display: flex;
  flex-direction: column;
  flex: ${p => p.$flex};
  min-height: 0;
  padding: 4px 3px 0;
  border: solid ${line};
  border-width: 0 0 ${p => (p.$last ? 0 : 1)}px 1px;
  background: #f5f5f5;
`;

const LayerModeRow = styled(ModeRow)`
  flex: none;
  margin-bottom: 2px;
`;

const LockRow = styled.div`
  display: flex;
  align-items: center;
  gap: 7px;
  flex: none;
  height: 25px;
`;

const Checker = styled.span`
  width: 16px;
  height: 16px;
  background: conic-gradient(#666 25%, #999 0 50%, #666 0 75%, #999 0) 0 0 / 8px 8px;
`;

const LayerList = styled.ul`
  flex: 1;
  border: 1px solid #a0a0a6;
`;

const LayerRow = styled.li`
  display: flex;
  align-items: center;
  height: 29px;
  padding-left: 7px;
  background: #ededed;
  font-family: ${wideFont};
  font-weight: 700;
`;

const LayerThumb = styled.span`
  width: 36px;
  height: 11px;
  margin: 0 4px 0 52px;
  background: #f5f5f5;
`;

const TabIcon = styled.span`
  width: 22px;
  height: 22px;
  border: 1px solid #000;
  background: ${p => p.$bg};
`;

const TagBox = styled.div`
  display: flex;
  align-items: center;
  flex: none;
  height: 20px;
  padding-right: 7px;
  border: 1px solid #a0a0a6;
  font-family: ${wideFont};

  input {
    flex: 1;
    min-width: 0;
    padding: 0 3px;
    border: 0;
    background: none;
    font-style: italic;
  }
  input::placeholder { color: #666; opacity: 1; }
`;

const GradientFrame = styled.div`
  display: grid;
  grid-template-columns: minmax(0, 1fr) 15px;
  grid-template-rows: minmax(0, 1fr) 15px;
  gap: 2px 3px;
  flex: 1;
  min-height: 0;
  margin: 2px 0 4px;
  padding: 1px;
  border: 1px solid #a0a0a6;
`;

const GradientList = styled.ul`
  overflow: hidden;
  font-family: ${wideFont};
`;

const GradientRow = styled.li`
  display: flex;
  align-items: center;
  gap: 4px;
  height: 23px;
  padding-left: 2px;
  white-space: nowrap;
  background: ${p => (p.$selected ? '#ededed' : 'none')};
`;

const Swatch = styled.span`
  flex: none;
  width: 34px;
  height: 19px;
  border: 1px solid #000;
  background: ${p => p.$bg};
`;

const checks = 'conic-gradient(#666 25%, #999 0 50%, #666 0 75%, #999 0) 0 0 / 8px 8px';

const gradients = [
  ['VG nach HG (harte Kante)', 'linear-gradient(90deg, #000 50%, #f5f5f5 50%)'],
  ['VG nach HG (HSV-Farbton gegen den Uhrzeigersinn)', 'linear-gradient(90deg, #000, #f5f5f5)'],
  ['VG nach HG (HSV-Farbton im Uhrzeigersinn)', 'linear-gradient(90deg, #000, #f5f5f5)'],
  ['VG nach HG (RGB)', 'linear-gradient(90deg, #000, #f5f5f5)'],
  ['VG nach Transparent', `linear-gradient(90deg, #000, transparent), ${checks}`],
  ['Abstract 1', 'linear-gradient(90deg, #4a40f0, #3a6af4 55%, #20b0b0 66%, #a050f0 72%, #f030d0 84%, #f08060 90%, #f8e040)'],
  ['Abstract 2', 'linear-gradient(90deg, #ff1020, #f83080 30%, #e070e0 52%, #2040a0 62%, #20e080 70%, #f0f0a0 80%, #e080f0 90%, #2020a0)'],
  ['Abstract 3', 'linear-gradient(90deg, #208030, #90a050 15%, #e8b070 42%, #6070a0 52%, #3050b0 60%, #8090a0 75%, #a0f080 88%, #f0f8b0 92%, #209030)'],
  ['Aneurism', `linear-gradient(90deg, transparent, #380050 25%, #600068 42%, #c01020 49%, #500070 56%, #380060 75%, transparent), ${checks}`],
];

const dockTabs = [
  ['Ebenen', 33, <g>{[13, 10, 7, 4].map(y => <path key={y} d={`M6 ${y}h15l-4 7H1z`} fill="#ededed" stroke="#999" />)}</g>],
  ['Kanäle', 28, <g><path d="M5 12h16l-4 8H0z" fill="#3870c0" stroke="#164080" /><path d="M5 9h16l-4 8H0z" fill="#58b030" stroke="#286010" /><path d="M5 2h16l-4 11H0z" fill="#e81818" stroke="#900" /></g>],
  ['Pfade', 29, <g><path d="M1 20Q3 5 9 8q8 4 13 0M2 3q4 14 19 12M12 20l8-13" fill="none" stroke="#7d9cc6" strokeWidth="1.300" /><path d="m2 9 14-6M8 12l11 4M10 17l6 4" fill="none" stroke="#555" strokeWidth=".8" /><path d="M6 5h3v3H6zM15 2h2v2h-2zM1 8h2v2H1zM12 16h3v3h-3zM17 14h3v3h-3zM8 11h2v2H8z" fill="#222" /></g>],
  ['Journal', 30, <g><path d="M9 7 15 2v4q8 1 6 12-2-5-6-5v4z" fill="#f6e79a" stroke="#d8ba50" /><path d="M1 8 8 1v4q10 1 8 14-2-6-8-6v4z" fill="#f5d533" stroke="#ad8710" /></g>],
  ['Farbverlauf', 29, <g><defs><linearGradient id="tabGrad"><stop offset="0" stopColor="#555" /><stop offset="1" stopColor="#fff" /></linearGradient></defs><path d="M2 3h17v17H2z" fill="url(#tabGrad)" stroke="#555" strokeWidth="1.400" /><path d="M3.500 4.500h14v14h-14z" fill="none" stroke="#eee" /></g>],
  ['Auswahl', 21, <path d="M.5 4.500h13v14H.5z" fill="#f25a5a" stroke="#f6b0b0" strokeDasharray="1 1" />],
  ['Palette', 27, <g><path d="M0 0h22v22H0z" /><path d="M1 1h4v4H1z" fill="#f02020" /><path d="M5 1h4v4H5z" fill="#f020c0" /><path d="M9 1h4v4H9z" fill="#2020e0" /><path d="M13 1h4v4h-4z" fill="#20e0e0" /><path d="M17 1h4v4h-4z" fill="#20e030" /><path d="M1 5h4v4H1z" fill="#f0f020" /><path d="M5 5h4v4H5z" fill="#800010" /><path d="M9 5h4v4H9z" fill="#600080" /><path d="M13 5h4v4h-4z" fill="#0a2070" /><path d="M17 5h4v4h-4z" fill="#108080" /><path d="M1 9h4v4H1z" fill="#108020" /><path d="M5 9h4v4H5z" fill="#807010" /><path d="M9 9h12v4H9z" fill="#333" /><path d="M1 13h20v4H1z" fill="#888" /><path d="M1 17h20v4H1z" fill="#e8e8e8" /></g>],
];

function Docks() {
  return (
    <RightDock>
      <NotebookTabs $height={30}>
        {dockTabs.map(([name, width, icon], i) => (
          <Tab key={name} aria-label={name} $active={i === 0} $width={width} $height={i === 0 ? 30 : 27} $pad={i === 0 ? 4 : 2}>
            <Svg width="22" height="22" viewBox="0 0 22 22">{icon}</Svg>
          </Tab>
        ))}
        <DockMenuButton aria-label="Reitermenü"><Triangle dir="left" color="#555" /></DockMenuButton>
      </NotebookTabs>
      <DockPanel $flex="369 0 0">
        <LayerModeRow>
          <label htmlFor="layerMode">Modus:</label>
          <ModeSelect id="layerMode" $plain><option>Normal</option></ModeSelect>
          <DropButton tabIndex={-1} aria-label="Modus öffnen"><Triangle dir="down" size={8} color="#000" /></DropButton>
        </LayerModeRow>
        <SpinField id="layerOpacity" label="Deckkraft" value="100,0" width="100%" fill="calc(100% - 9px)" dim />
        <LockRow>Sperre:<SmallIcon name="brush" size={16} /><Checker /></LockRow>
        <LayerList>
          <LayerRow><SmallIcon name="eye" size={16} /><LayerThumb />Hintergrund</LayerRow>
        </LayerList>
        <IconRow $height={22} $pad="0 7px 0 6px">
          {['page', 'folder', 'raise', 'lower', 'copy', 'anchor', 'trash'].map(n => <IconButton key={n} aria-label={n}><SmallIcon name={n} /></IconButton>)}
        </IconRow>
      </DockPanel>
      <NotebookTabs $height={34} $indent={3}>
        <Tab $width={54} $height={26} $top={2}><TabIcon $bg="radial-gradient(circle, #111, #888 25%, #f5f5f5 50%)" />Pinsel</Tab>
        <Tab $width={58} $height={26} $top={2}><TabIcon $bg="repeating-linear-gradient(90deg, #e8a030 0 2px, #f8c860 2px 5px, #f0b040 5px 7px)" />Muster</Tab>
        <Tab $active $width={86} $height={28} $pad={2} $top={2}><TabIcon $bg="linear-gradient(90deg, #000, #f5f5f5)" />Farbverläufe</Tab>
        <DockMenuButton aria-label="Reitermenü"><Triangle dir="left" color="#555" /></DockMenuButton>
      </NotebookTabs>
      <DockPanel $flex="291 0 0" $last>
        <TagBox><input aria-label="Filter" placeholder="Filter" /><Triangle dir="down" size={8} color="#000" /></TagBox>
        <GradientFrame>
          <GradientList>
            {gradients.map(([name, bg]) => (
              <GradientRow key={name} $selected={name === 'VG nach HG (RGB)'}><Swatch $bg={bg} />{name}</GradientRow>
            ))}
          </GradientList>
          <Scrollbar vertical share={11} />
          <Scrollbar share={76} />
        </GradientFrame>
        <TagBox><input aria-label="Tags" placeholder="Tags eingeben" /><Triangle dir="down" size={8} color="#000" /></TagBox>
        <IconRow $pad="0 16px 0 14px">
          {['editRed', 'page', 'copy', 'trash', 'refresh'].map(n => <IconButton key={n} aria-label={n}><SmallIcon name={n} /></IconButton>)}
        </IconRow>
      </DockPanel>
    </RightDock>
  );
}

/* ---------- app ---------- */

// the index is the position of the underlined mnemonic
const menus = [['Datei', 0], ['Bearbeiten', 9], ['Auswahl', 0], ['Ansicht', 2], ['Bild', 0], ['Ebene', 0], ['Farben', 0], ['Werkzeuge', 0], ['Filter', 5], ['Fenster', 0], ['Hilfe', 0]];

export default function App() {
  return (
    <Window>
      <GlobalStyle />
      <TitleBar>
        <AppIcon />
        <Title>Unbenannt-1.0 (RGB-Farben, 1 Ebene) 1200x300 – GIMP</Title>
        <WindowButtons>
          <WindowButton aria-label="Minimieren"><Svg width="12" height="6" viewBox="0 0 12 6"><path d="M1 2h10v3H1z" fill="#fff" stroke="#444" strokeWidth=".7" /></Svg></WindowButton>
          <WindowButton aria-label="Wiederherstellen"><Svg width="12" height="12" viewBox="0 0 12 12"><path d="M4 1.500h7v7H4z" fill="none" stroke="#fff" strokeWidth="1.600" /><path d="M1.500 4h6.500v6.500H1.500z" fill="#7aa" stroke="#fff" strokeWidth="1.800" /><path d="M4 6.500h1.500V8H4z" fill="#345" /></Svg></WindowButton>
          <WindowButton $close aria-label="Schließen"><Svg width="12" height="10" viewBox="0 0 12 10"><path d="m2 1 8 8m0-8-8 8" stroke="#5a2a2a" strokeWidth="3.600" /><path d="m2 1 8 8m0-8-8 8" stroke="#fff" strokeWidth="2.400" /></Svg></WindowButton>
        </WindowButtons>
      </TitleBar>
      <MenuBar>
        {menus.map(([name, at]) => (
          <MenuItem key={name}>{name.slice(0, at)}<u>{name[at]}</u>{name.slice(at + 1)}</MenuItem>
        ))}
      </MenuBar>
      <Body>
        <Toolbox />
        <ImageWindow />
        <Docks />
      </Body>
    </Window>
  );
}
